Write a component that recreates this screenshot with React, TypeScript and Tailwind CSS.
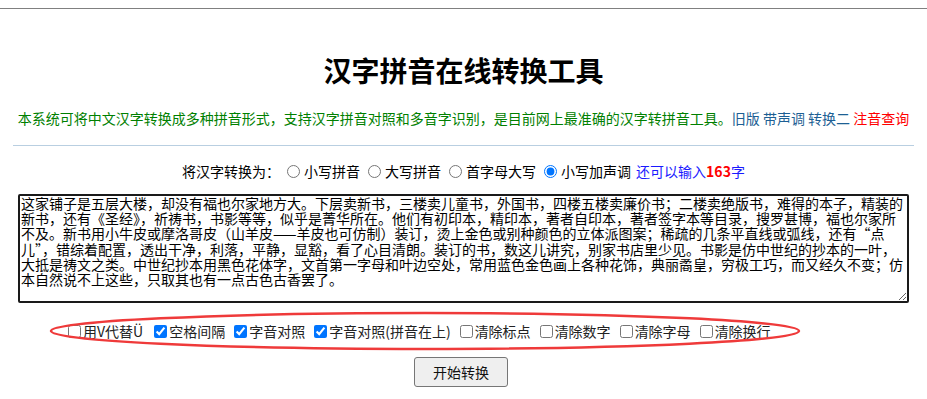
import React from "react";

const textLines = [
  "这家铺子是五层大楼，却没有福也尔家地方大。下层卖新书，三楼卖儿童书，外国书，四楼五楼卖廉价书；二楼卖绝版书，难得的本子，精装的",
  "新书，还有《圣经》，祈祷书，书影等等，似乎是菁华所在。他们有初印本，精印本，著者自印本，著者签字本等目录，搜罗甚博，福也尔家所",
  "不及。新书用小牛皮或摩洛哥皮（山羊皮——羊皮也可仿制）装订，烫上金色或别种颜色的立体派图案；稀疏的几条平直线或弧线，还有“点",
  "儿”，错综着配置，透出干净，利落，平静，显豁，看了心目清朗。装订的书，数这儿讲究，别家书店里少见。书影是仿中世纪的抄本的一叶，",
  "大抵是祷文之类。中世纪抄本用黑色花体字，文首第一字母和叶边空处，常用蓝色金色画上各种花饰，典丽矞皇，穷极工巧，而又经久不变；仿",
  "本自然说不上这些，只取其也有一点古色古香罢了。",
];

const radios = [
  { label: "小写拼音", checked: false },
  { label: "大写拼音", checked: false },
  { label: "首字母大写", checked: false },
  { label: "小写加声调", checked: true },
];

const options = [
  { label: "用V代替Ü", checked: false },
  { label: "空格间隔", checked: true },
  { label: "字音对照", checked: true },
  { label: "字音对照(拼音在上)", checked: true },
  { label: "清除标点", checked: false },
  { label: "清除数字", checked: false },
  { label: "清除字母", checked: false },
  { label: "清除换行", checked: false },
];

export default function App() {
  return (
    <div className="min-h-screen bg-white font-['Noto_Sans_CJK_SC','Noto_Sans',sans-serif] text-black">
      <div className="h-2" />
      <div className="h-px bg-[#808080]" />

      <h1 className="mt-[43px] text-center text-[28px] font-bold leading-[36px] text-black">
        汉字拼音在线转换工具
      </h1>

      <p className="mt-[20px] whitespace-nowrap text-center text-[14px] leading-[20px] text-[#008000]">
        本系统可将中文汉字转换成多种拼音形式，支持汉字拼音对照和多音字识别，是目前网上最准确的汉字转拼音工具。
        <span className="text-[#1d5f94]">旧版</span>{" "}
        <span className="text-[#1d5f94]">带声调</span>{" "}
        <span className="text-[#1d5f94]">转换二</span>{" "}
        <span className="text-[#ff0000]">注音查询</span>
      </p>

      <div className="mx-[13px] mt-[17px] h-px bg-[#b9cfe1]" />

      <div className="mt-[15px] flex h-5 items-center justify-center text-[14px] leading-5">
        <span className="mr-[2px]">将汉字转换为：</span>
        {radios.map((r, i) => (
          <label
            key={r.label}
            className={`flex items-center gap-1 ${i === 0 ? "ml-[5px]" : "ml-2"}`}
          >
            <input
              type="radio"
              name="mode"
              defaultChecked={r.checked}
              className="h-[13px] w-[13px]"
            />
            <span>{r.label}</span>
          </label>
        ))}
        <span className="ml-[5px] text-[#1a1aff]">
          还可以输入<b className="text-[#ff0000]">163</b>字
        </span>
      </div>

      <div className="mx-[18px] mt-[13px]">
        <textarea
          wrap="off"
          readOnly
          defaultValue={textLines.join("\n")}
          className="block h-[109px] w-full overflow-hidden rounded-[2px] border-2 border-[#1a1a1a] px-px pt-0 text-[14px] leading-[15.2px] text-black outline-none"
        />
      </div>

      <div className="relative mt-[18px] flex h-5 items-center pl-[68px] text-[14px] leading-5 text-[#222]">
        {options.map((o, i) => (
          <label
            key={o.label}
            className={`flex items-center gap-[2px] ${i === 0 ? "mr-[2px]" : "ml-[9px]"}`}
          >
            <input
              type="checkbox"
              defaultChecked={o.checked}
              className="h-[13px] w-[13px]"
            />
            <span>{o.label}</span>
          </label>
        ))}
        <svg
          className="pointer-events-none absolute left-[48px] top-[-11px] h-[42px] w-[756px]"
          viewBox="0 0 756 42"
        >
          <ellipse
            cx="377"
            cy="21"
            rx="374"
            ry="18"
            fill="none"
            stroke="#ef3a3a"
            strokeWidth="2.5"
          />
        </svg>
      </div>

      <div className="mt-[16px] flex justify-center pr-[5px]">
        <button className="h-[30px] w-[94px] rounded-[3px] border border-[#767676] bg-[#efefef] text-[14px] text-[#111]">
          开始转换
        </button>
      </div>
    </div>
  );
}
